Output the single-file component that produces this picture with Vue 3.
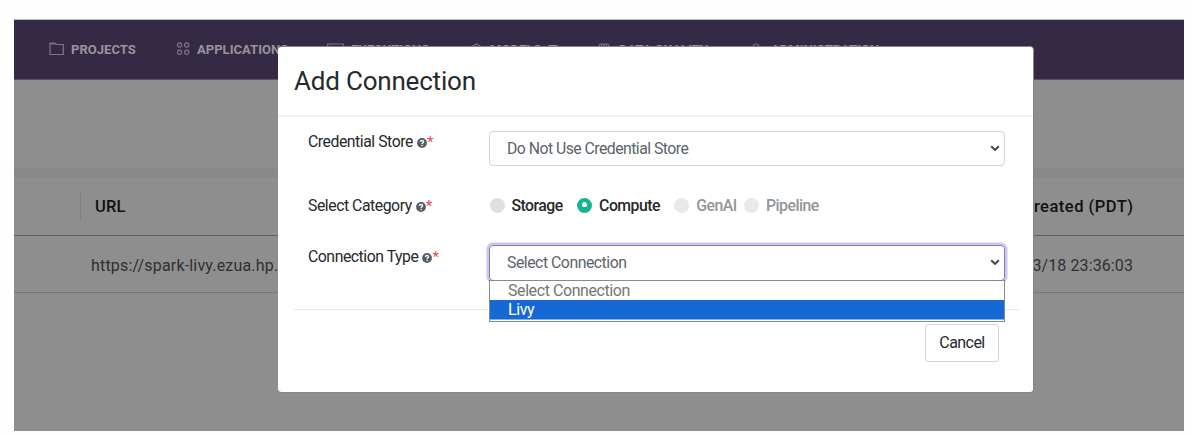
<script setup>
const rows = [
  { key: 'store', label: 'Credential Store' },
  { key: 'category', label: 'Select Category' },
  { key: 'type', label: 'Connection Type' },
]
const categories = [
  { name: 'Storage', cls: 'storage' },
  { name: 'Compute', cls: 'compute', checked: true },
  { name: 'GenAI', cls: 'genai', disabled: true },
  { name: 'Pipeline', cls: 'pipeline', disabled: true },
]
</script>

<template>
  <div class="page">
    <div class="app">
      <nav class="nav">
        <div class="item">
          <svg width="16" height="14" viewBox="0 0 16 14"><path d="M1 12.500V1h5l1.400 1.500H14.300v10zM1 1.800h5.500" /></svg>
          <span>PROJECTS</span>
        </div>
        <div class="item">
          <svg width="14" height="14" viewBox="0 0 14 14"><circle cx="2.500" cy="3" r="2.1" /><circle cx="9.700" cy="3" r="2.1" /><circle cx="2.500" cy="10.3" r="2.1" /><circle cx="9.700" cy="10.3" r="2.1" /></svg>
          <span>APPLICATIONS</span>
        </div>
        <div class="item">
          <svg width="17" height="14" viewBox="0 0 17 14"><path d="M.7 1h15.6v12H.7zM3.5 3l3 2.500-3 2.500" /></svg>
          <span>EXECUTIONS</span>
        </div>
        <div class="item">
          <svg width="13" height="14" viewBox="0 0 13 14"><path d="M6.500 1l5.500 3v6l-5.500 3L1 10V4zM1 4l5.500 3L12 4M6.500 7v6" /></svg>
          <span>MODELS</span><i class="caret"></i>
        </div>
        <div class="item quality">
          <svg width="14" height="14" viewBox="0 0 14 14"><path d="M3 1h8l2 4-6 8-6-8zM5 1L4 5l3 8M9 1l1 4-3 8M1 5h12M7 1v4" /></svg>
          <span>DATA QUALITY</span>
        </div>
        <div class="item admin">
          <svg width="12" height="14" viewBox="0 0 12 14"><circle cx="6" cy="4" r="3" /><path d="M1 13c0-6 10-6 10 0z" /></svg>
          <span>ADMINISTRATION</span>
        </div>
      </nav>
      <div class="toolbar"></div>
      <div class="strip"></div>
      <div class="thead">
        <i class="divider"></i><b class="url-h">URL</b><b class="created">Created (PDT)</b>
      </div>
      <div class="trow">
        <span class="url">https://spark-livy.ezua.hp.</span><span class="date">2024/03/18 23:36:03</span>
      </div>
    </div>

    <section class="modal">
      <header><h1>Add Connection</h1></header>
      <div class="body">
        <div v-for="r in rows" :key="r.key" class="row" :class="r.key">
          <label>
            <span>{{ r.label }}</span>
            <svg class="help" width="10" height="10" viewBox="0 0 10 10"><circle cx="5" cy="5" r="4.900" fill="#525c66" /><path d="M3.400 3.900C3.500 2 6.700 2.100 6.600 3.900 6.500 4.800 5.100 4.800 5.100 6" fill="none" stroke="#fff" stroke-width="1.300" /><rect x="4.400" y="6.800" width="1.400" height="1.300" fill="#fff" /></svg>
            <em>*</em>
          </label>
          <div v-if="r.key === 'store'" class="select">
            <span>Do Not Use Credential Store</span>
            <svg width="10" height="7" viewBox="0 0 10 7"><path d="M1.200 1.300L5 4.900l3.800-3.600" /></svg>
          </div>
          <div v-else-if="r.key === 'category'" class="radios">
            <div v-for="c in categories" :key="c.name" class="radio" :class="[c.cls, { checked: c.checked, disabled: c.disabled }]">
              <i></i><span>{{ c.name }}</span>
            </div>
          </div>
          <div v-else class="select focus">
            <span>Select Connection</span>
            <svg width="10" height="7" viewBox="0 0 10 7"><path d="M1.200 1.300L5 4.900l3.800-3.600" /></svg>
            <div class="menu">
              <div class="opt">Select Connection</div>
              <div class="opt active">Livy</div>
            </div>
          </div>
        </div>
      </div>
      <footer><button>Cancel</button></footer>
    </section>
  </div>
</template>

<style>
body { margin: 0; background: #fff; overflow: hidden; }
</style>
<style scoped>
* { box-sizing: border-box; }
.page { position: relative; width: 1192px; height: 435px; background: #fefefe; font-family: Roboto, sans-serif; padding: 19px 8px 4px 14px; white-space: nowrap; }
.app { height: 412px; background: #8e8e8e; overflow: hidden; border-top: 1px solid #b9bbb9; }
.nav { height: 60px; background: #342a45; border-bottom: 1px solid #5b5267; display: grid; grid-template-columns: 128px 150px 143px 127px 153px auto; padding-left: 35px; align-items: center; color: #99949b; font-size: 13px; font-weight: 700; }
.item { display: flex; align-items: center; height: 16px; letter-spacing: .04px; }
.item svg { fill: none; stroke: #80728a; stroke-width: 1.200; margin-right: 6px; flex: none; }
.item:nth-child(1) svg, .item:nth-child(2) svg { margin-top: -2px; }
.item:nth-child(3) svg, .item:nth-child(4) svg { margin-right: 7px; }
.quality svg { margin-right: 8px; }
.admin svg { margin-right: 9px; }
.caret { margin: -5px 0 0 7px; border: 5px solid transparent; border-top-color: #99949b; border-bottom: 0; }
.toolbar { height: 88px; }
.strip { height: 10px; background: #888; }
.thead { height: 58px; border-bottom: 1px solid #606060; display: flex; align-items: center; color: #111; font-size: 16.500px; padding: 0 51px 0 66px; }
.thead b { font-weight: 500; }
.divider { width: 1px; height: 29px; background: #7f7f7f; margin-right: 14px; }
.url-h { letter-spacing: .2px; }
.created { margin-left: auto; letter-spacing: .5px; margin-right: -.5px; }
.trow { height: 57px; border-bottom: 1px solid #777; display: flex; align-items: center; color: #303030; font-size: 16px; padding: 3px 51px 0 77px; }
.url { letter-spacing: .18px; }
.date { margin-left: auto; letter-spacing: .1px; }
.modal { position: absolute; left: 278px; top: 46px; width: 756px; height: 347px; background: #fff; border: 1px solid #87868a; border-width: 1px 1px 1px 0; border-radius: 4px; }
header { height: 70px; border-bottom: 2px solid #f3f3f3; padding: 17px 0 0 16px; }
h1 { margin: 0; font-size: 26px; line-height: 34px; font-weight: 400; color: #262a2c; letter-spacing: -.2px; }
.body { height: 193px; margin: 0 14px 0 16px; border-bottom: 1px solid #e7e7e7; padding: 14px 15px 0 14px; color: #26292b; }
.row { display: grid; grid-template-columns: 181px 516px; align-items: start; }
.row.store { height: 65px; }
.row.category { height: 49px; }
label { display: flex; align-items: center; font-size: 15.800px; line-height: 20px; height: 20px; letter-spacing: -.46px; margin-top: 1px; }
.category label { margin-top: 0; }
.type label { margin-top: 2px; }
.help { margin: 2px 0 0 4px; }
em { font-style: normal; color: #ef4550; font-size: 15px; }
.select { position: relative; height: 35px; border: 1px solid #ced4da; border-radius: 4px; display: flex; align-items: center; justify-content: space-between; padding: 0 4px 0 17px; font-size: 15.800px; letter-spacing: -.53px; color: #5b636a; }
.select.focus { height: 36px; padding-bottom: 1px; letter-spacing: -.47px; }
.select svg { fill: none; stroke: #3c4349; stroke-width: 2; }
.focus { border-color: #8c73cd; box-shadow: 0 0 0 2.500px #cfc7e6; }
.menu { position: absolute; left: -1px; top: 34px; width: 516px; height: 42px; border: 1px solid #8a8a8a; background: #fff; }
.opt { height: 19px; line-height: 19px; padding-left: 18px; color: #757575; font-size: 16px; letter-spacing: -.42px; }
.opt.active { height: 20px; background: #1669d4; color: #fff; border-bottom: 1px solid #7fb2ee; }
.radios { display: flex; height: 20px; margin: -.5px 0 0 .5px; }
.radio { display: flex; align-items: center; font-size: 15.800px; font-weight: 500; height: 20px; color: #26292b; letter-spacing: -.52px; }
.radio i { width: 15px; height: 15px; border-radius: 50%; background: #dfdfdf; margin-right: 7px; }
.checked i { background: #fff; border: 4.500px solid #19b394; border-width: 4px 5px 6px; }
.disabled { color: #929598; }
.disabled i { background: #e9e9e9; }
.storage, .compute { margin-right: 14.400px; }
.genai { margin-right: 7.400px; }
footer { display: flex; justify-content: flex-end; padding: 14px 34px 0 0; }
button { width: 74px; height: 38px; border: 1px solid #d0d4dc; border-radius: 3px; background: #fff; font: 400 16px Roboto, sans-serif; letter-spacing: -.55px; color: #24282b; padding: 0 0 1px; }
</style>
